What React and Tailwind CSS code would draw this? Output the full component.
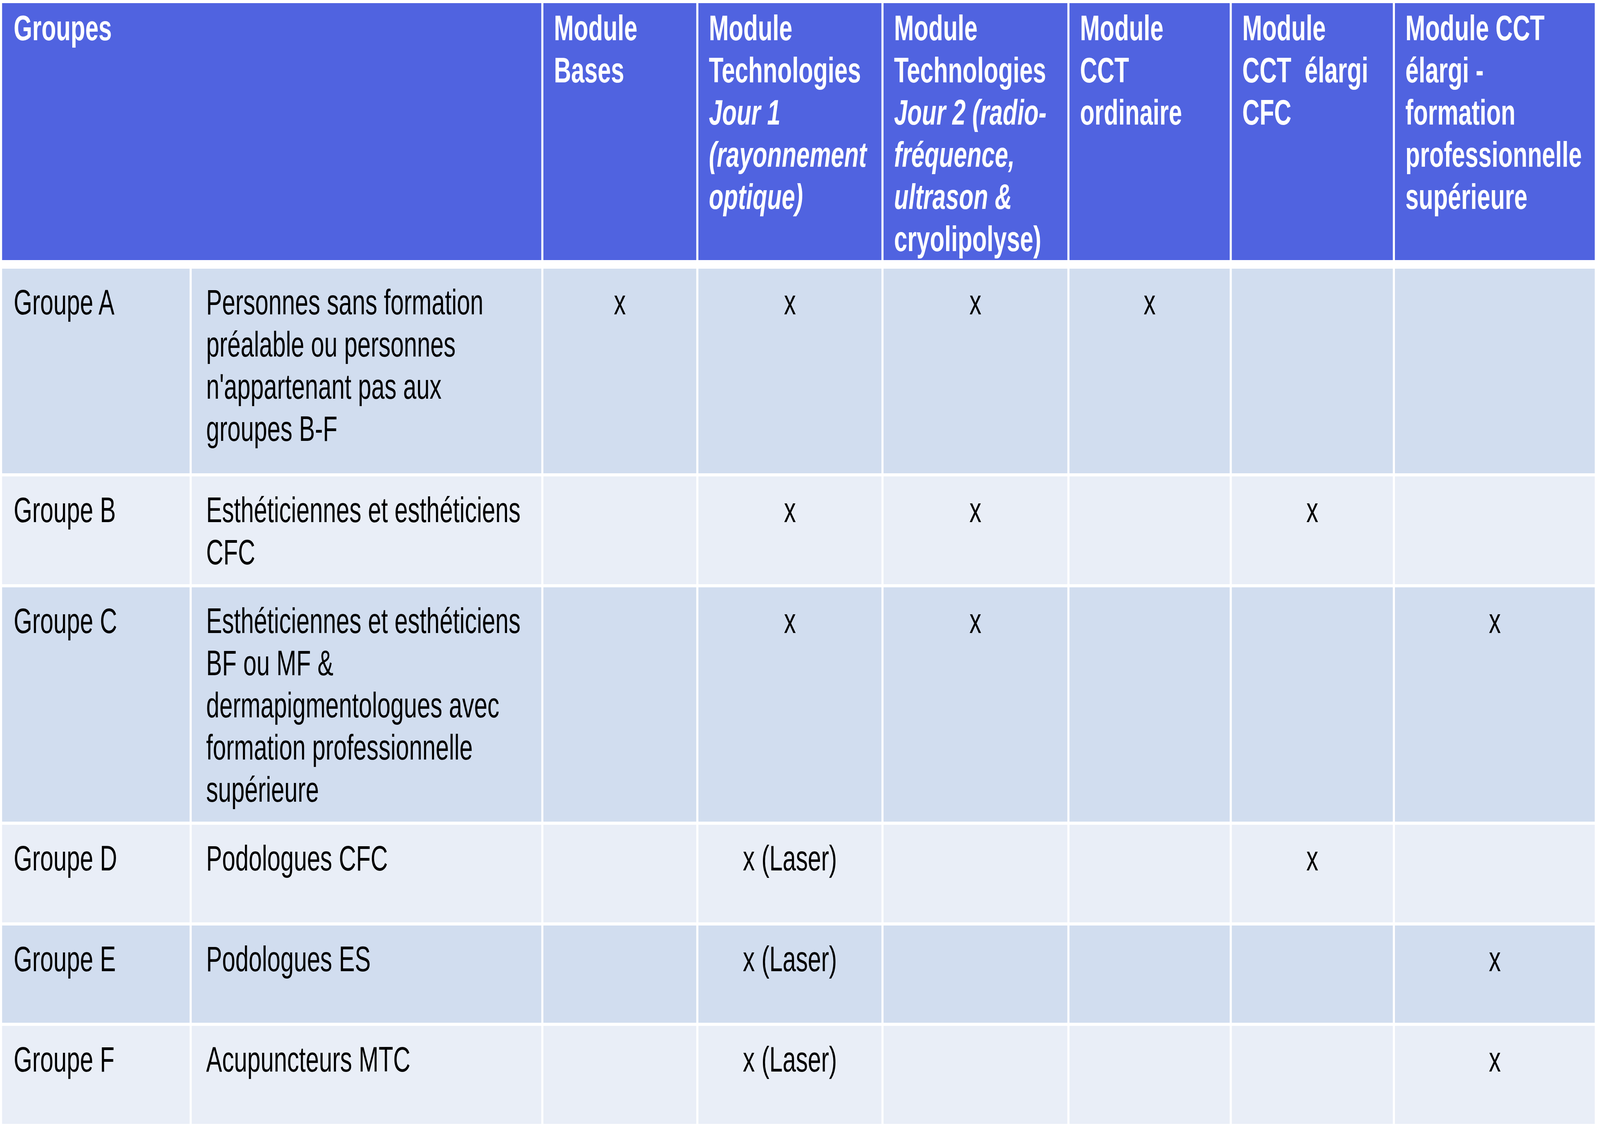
import React from "react";

// table laid out on the 6101px-wide design grid
const cols =
  "grid grid-cols-[715px_1333px_583px_698px_701px_611px_614px_762px] gap-x-[8px]";

const headers = [
  { lines: [["Module"], ["Bases"]] },
  {
    lines: [["Module"], ["Technologies"], ["Jour 1", true], ["(rayonnement", true], ["optique)", true]],
  },
  {
    lines: [
      ["Module"],
      ["Technologies"],
      ["Jour 2 (radio-", true],
      ["fréquence,", true],
      ["ultrason &", true],
      ["cryolipolyse)"],
    ],
  },
  { lines: [["Module"], ["CCT"], ["ordinaire"]] },
  { lines: [["Module"], ["CCT\u00a0 élargi"], ["CFC"]] },
  {
    lines: [["Module CCT"], ["élargi -"], ["formation"], ["professionnelle"], ["supérieure"]],
  },
];

const rows = [
  {
    group: "Groupe A",
    desc: ["Personnes sans formation", "préalable ou personnes", "n'appartenant pas aux", "groupes B-F"],
    marks: ["x", "x", "x", "x", "", ""],
    dark: true,
  },
  {
    group: "Groupe B",
    desc: ["Esthéticiennes et esthéticiens", "CFC"],
    marks: ["", "x", "x", "", "x", ""],
    dark: false,
  },
  {
    group: "Groupe C",
    desc: [
      "Esthéticiennes et esthéticiens",
      "BF ou MF &",
      "dermapigmentologues avec",
      "formation professionnelle",
      "supérieure",
    ],
    marks: ["", "x", "x", "", "", "x"],
    dark: true,
  },
  {
    group: "Groupe D",
    desc: ["Podologues CFC"],
    marks: ["", "x (Laser)", "", "", "x", ""],
    dark: false,
  },
  {
    group: "Groupe E",
    desc: ["Podologues ES"],
    marks: ["", "x (Laser)", "", "", "", "x"],
    dark: true,
  },
  {
    group: "Groupe F",
    desc: ["Acupuncteurs MTC"],
    marks: ["", "x (Laser)", "", "", "", "x"],
    dark: false,
  },
];

const App = () => {
  // the window can come out narrower than the 6101px design, fit it horizontally
  const fit = typeof window !== "undefined" ? Math.min(1, window.innerWidth / 6101) : 1;

  return (
    <div className="w-screen h-screen overflow-hidden bg-white">
      <div
        className="w-[6101px] h-[2886px] bg-white p-[8px] origin-top-left font-['Liberation_Sans',Arial,sans-serif] text-[91px] leading-[108px]"
        style={{ transform: `scaleX(${fit})` }}
      >
        {/* header */}
        <div className={cols + " h-[655px]"}>
          <div className="col-span-2 bg-[#5063E0] text-white font-bold pl-[44px] pt-[10px]">
            Groupes
          </div>
          {headers.map((h, i) => (
            <div key={i} className="bg-[#5063E0] text-white font-bold pl-[40px] pt-[10px]">
              {h.lines.map(([t, it], j) => (
                <span key={j} className={"block whitespace-pre " + (it ? "italic" : "")}>
                  {t}
                </span>
              ))}
            </div>
          ))}
        </div>

        {/* body */}
        <div
          className={
            cols + " mt-[25px] gap-y-[8px] grid-rows-[524px_276px_600px_250px_249px_251px]"
          }
        >
          {rows.map((r) => {
            const bg = r.dark ? "bg-[#D1DDEF]" : "bg-[#E9EEF7]";
            return (
              <React.Fragment key={r.group}>
                <div className={bg + " pl-[44px] pt-[32px] text-black"}>{r.group}</div>
                <div className={bg + " pl-[55px] pt-[32px] text-black"}>
                  {r.desc.map((d, j) => (
                    <span key={j} className="block whitespace-nowrap">
                      {d}
                    </span>
                  ))}
                </div>
                {r.marks.map((m, j) => (
                  <div key={j} className={bg + " pt-[32px] text-center text-black"}>
                    {m}
                  </div>
                ))}
              </React.Fragment>
            );
          })}
        </div>
      </div>
    </div>
  );
};

export default App;
